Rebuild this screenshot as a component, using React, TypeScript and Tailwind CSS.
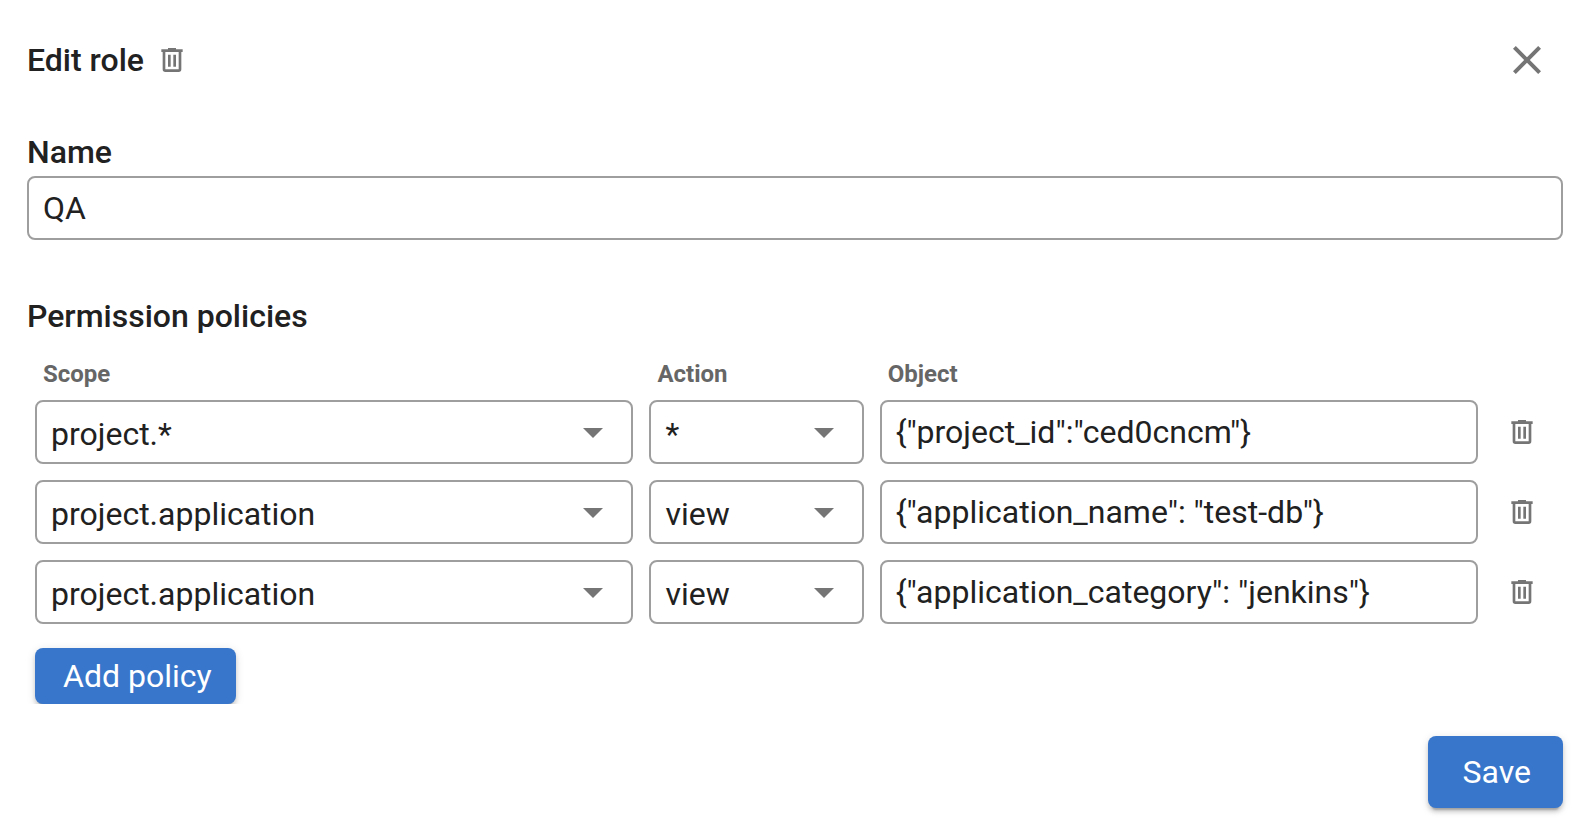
import { useState } from "react";

const TRASH =
  "M9,3V4H4V6H5V19A2,2 0 0,0 7,21H17A2,2 0 0,0 19,19V6H20V4H15V3H9M7,6H17V19H7V6M9,8V17H11V8H9M13,8V17H15V8H13Z";
const CLOSE =
  "M19,6.41L17.59,5L12,10.59L6.41,5L5,6.41L10.59,12L5,17.59L6.41,19L12,13.41L17.59,19L19,17.59L13.41,12L19,6.41Z";
const MENU_DOWN = "M7,10L12,15L17,10H7Z";

const SHADOW =
  "shadow-[0_6px_2px_-4px_rgba(0,0,0,0.2),0_4px_4px_0_rgba(0,0,0,0.14),0_2px_10px_0_rgba(0,0,0,0.12)]";
const FIELD = "h-16 w-full rounded-lg border-2 border-[#9e9e9e] bg-white px-3.5 outline-none focus:border-[#3876cb]";

function Icon({ path, className }: { path: string; className: string }) {
  return (
    <svg viewBox="0 0 24 24" fill="currentColor" aria-hidden="true" className={className}>
      <path d={path} />
    </svg>
  );
}

function Select({
  label,
  value,
  options,
  onChange,
}: {
  label: string;
  value: string;
  options: string[];
  onChange: (value: string) => void;
}) {
  return (
    <div className="relative">
      <select
        aria-label={label}
        value={value}
        onChange={(e) => onChange(e.target.value)}
        className={`${FIELD} appearance-none pt-1`}
      >
        {options.map((o) => (
          <option key={o}>{o}</option>
        ))}
      </select>
      <Icon path={MENU_DOWN} className="pointer-events-none absolute top-2 right-4 size-12 text-[#757575]" />
    </div>
  );
}

type Policy = { id: number; scope: string; action: string; object: string };

const SCOPES = ["*", "project.*", "project.settings", "project.application"];
const ACTIONS = ["*", "view", "edit"];

const INITIAL: Policy[] = [
  { id: 1, scope: "project.*", action: "*", object: '{"project_id":"ced0cncm"}' },
  { id: 2, scope: "project.application", action: "view", object: '{"application_name": "test-db"}' },
  { id: 3, scope: "project.application", action: "view", object: '{"application_category": "jenkins"}' },
];

export default function App() {
  const [name, setName] = useState("QA");
  const [policies, setPolicies] = useState(INITIAL);

  const update = (id: number, patch: Partial<Policy>) =>
    setPolicies((all) => all.map((p) => (p.id === id ? { ...p, ...patch } : p)));
  const remove = (id: number) => setPolicies((all) => all.filter((p) => p.id !== id));
  const add = () =>
    setPolicies((all) => [...all, { id: Date.now(), scope: "*", action: "*", object: "*" }]);

  return (
    <form
      onSubmit={(e) => e.preventDefault()}
      className="min-h-screen bg-white pt-6 pr-[29px] pb-6 pl-[27px] font-[Roboto,sans-serif] text-[32px] leading-[48px] text-[#212121]"
    >
      <header className="flex h-[72px] items-center">
        <h1 className="font-medium">Edit role</h1>
        <button type="button" aria-label="Delete role" className="ml-3 text-[#757575]">
          <Icon path={TRASH} className="size-8" />
        </button>
        <button type="button" aria-label="Close" className="ml-auto p-3 text-[#757575]">
          <Icon path={CLOSE} className="size-12" />
        </button>
      </header>

      <label htmlFor="role-name" className="mt-8 block font-medium">
        Name
      </label>
      <input
        id="role-name"
        value={name}
        onChange={(e) => setName(e.target.value)}
        className={`${FIELD} block`}
      />

      <section className="mt-[52px] overflow-hidden">
        <h2 className="font-medium">Permission policies</h2>
        <table className="mt-4 w-full table-fixed">
          <thead>
            <tr className="text-left text-2xl leading-9 text-[#666666]">
              <th className="w-[40%] px-4 py-0 leading-9 font-bold">Scope</th>
              <th className="w-[15%] px-4 py-0 leading-9 font-bold">Action</th>
              <th className="w-[40%] px-4 py-0 leading-9 font-bold">Object</th>
              <td className="w-[5%] p-0" />
            </tr>
          </thead>
          <tbody>
            {policies.map((p) => (
              <tr key={p.id}>
                <td className="p-2">
                  <Select
                    label="Scope"
                    value={p.scope}
                    options={SCOPES}
                    onChange={(scope) => update(p.id, { scope })}
                  />
                </td>
                <td className="p-2">
                  <Select
                    label="Action"
                    value={p.action}
                    options={ACTIONS}
                    onChange={(action) => update(p.id, { action })}
                  />
                </td>
                <td className="p-2">
                  <input
                    aria-label="Object"
                    value={p.object}
                    onChange={(e) => update(p.id, { object: e.target.value })}
                    className={`${FIELD} block`}
                  />
                </td>
                <td className="p-0">
                  <button
                    type="button"
                    aria-label="Delete policy"
                    onClick={() => remove(p.id)}
                    className="ml-5 block text-[#757575]"
                  >
                    <Icon path={TRASH} className="size-8" />
                  </button>
                </td>
              </tr>
            ))}
          </tbody>
        </table>
        <button
          type="button"
          onClick={add}
          className={`mt-4 ml-2 block h-14 rounded-lg bg-[#3876cb] pr-6 pl-7 text-white ${SHADOW}`}
        >
          Add policy
        </button>
      </section>

      <div className="mt-8 flex justify-end">
        <button type="submit" className={`h-[72px] rounded-lg bg-[#3876cb] pr-8 pl-[35px] text-white ${SHADOW}`}>
          Save
        </button>
      </div>
    </form>
  );
}
